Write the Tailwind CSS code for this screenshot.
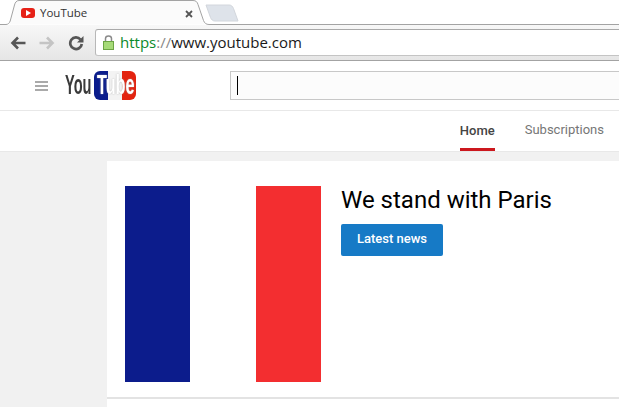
<!DOCTYPE html>
<html lang="en">
<head>
    <meta charset="UTF-8">
    <title>YouTube</title>
    <script src="https://cdn.jsdelivr.net/npm/@tailwindcss/browser@4"></script>
</head>
<body class="w-[619px] h-[407px] overflow-hidden bg-white font-['Roboto',sans-serif]">
    <!-- tab strip -->
    <div class="relative h-[25px] bg-white">
        <svg class="absolute left-0 top-0" width="619" height="25" viewBox="0 0 619 25" fill="none">
            <path d="M0 24.5H6C8 24.5 9.500 23 10.200 21L14.500 5C15.100 2.500 16.500 .5 19 .5H193C196 .5 197.300 2 198 4.500L203.500 20.500C204.500 23 206 24.500 209 24.500H619" fill="#fbfbfb" stroke="#a3a3a3"/>
            <path d="M206 5H229C231 5 232.500 6 233.500 8.500L238 21H215C213 21 211.500 20 210.500 17.500Z" fill="#dee3ea" stroke="#d2d6dc"/>
        </svg>
        <div class="absolute left-[21px] top-[8px] flex w-[14px] h-[10px] items-center justify-center rounded-[3px] bg-[#e62117]">
            <svg width="5" height="6" viewBox="0 0 5 6"><path d="M0 0L5 3L0 6Z" fill="#fff"/></svg>
        </div>
        <span class="absolute left-[40px] top-[5px] font-['Open_Sans',sans-serif] text-[11.5px] leading-[16px] text-[#333]">YouTube</span>
        <svg class="absolute left-[185px] top-[10px]" width="8" height="8" viewBox="0 0 8 8"><path d="M1 1L7 7M7 1L1 7" stroke="#555" stroke-width="1.800"/></svg>
    </div>
    <!-- toolbar -->
    <div class="flex h-[36px] items-center bg-linear-to-b from-[#f7f7f7] to-[#e6e6e6] border-b border-[#a3a3a3]">
        <svg class="ml-[10px]" width="16" height="14" viewBox="0 0 16 14" fill="none"><path d="M15.500 7H3M8 1.500L2.500 7L8 12.500" stroke="#565656" stroke-width="2.600"/></svg>
        <svg class="ml-[13px]" width="16" height="14" viewBox="0 0 16 14" fill="none"><path d="M.5 7H13M8 1.500L13.500 7L8 12.500" stroke="#c4c4c4" stroke-width="2.600"/></svg>
        <svg class="ml-[13px]" width="16" height="16" viewBox="0 0 16 16" fill="none"><path d="M12.500 4.500A5.800 5.800 0 1 0 13.800 9" stroke="#565656" stroke-width="2.700"/><path d="M15.500 1V7.500H9Z" fill="#565656"/></svg>
        <div class="ml-[11px] flex h-[27px] flex-1 items-center rounded-l-[3px] border border-r-0 border-t-[#a9a9a9] border-l-[#b8b8b8] border-b-[#c4c4c4] bg-white pl-[6px]">
            <svg width="13" height="17" viewBox="0 0 13 17" fill="none"><path d="M3.500 7V4.500C3.500 1 9.500 1 9.500 4.500V7" stroke="#8a8a8a" stroke-width="1.500"/><rect x="1.500" y="7.500" width="10" height="8" fill="#a6da78" stroke="#6da544"/></svg>
            <span class="ml-[5px] font-['Open_Sans',sans-serif] text-[15px] leading-none text-[#1a1a1a]"><span class="text-[#0b8a2b]">https</span><span class="text-[#888]">://</span>www.youtube.com</span>
        </div>
    </div>
    <!-- masthead -->
    <div class="flex h-[50px] items-center border-b border-[#e8e8e8] bg-white">
        <div class="ml-[35px] flex w-[13px] flex-col gap-[2px]">
            <div class="h-[2px] bg-[#aaa]"></div><div class="h-[2px] bg-[#aaa]"></div><div class="h-[2px] bg-[#aaa]"></div>
        </div>
        <div class="relative ml-[17px] h-[29px] w-[71px] font-['Liberation_Sans',sans-serif] font-bold text-[27px] leading-[29px] blur-[0.4px]">
            <div class="absolute right-0 top-0 flex h-[29px] w-[42px] overflow-hidden rounded-[6px]">
                <div class="w-[14px] bg-[#0a1c8c]"></div><div class="w-[14px] bg-[#f3f3f3]"></div><div class="flex-1 bg-[#e3230f]"></div>
            </div>
            <span class="absolute left-0 top-0 origin-left scale-x-[0.54] text-[#3a3a3a]">You</span>
            <span class="absolute left-[32px] top-0 origin-left scale-x-[0.6] text-white [text-shadow:0_0_2px_#aaa]">Tube</span>
        </div>
        <div class="ml-[94px] flex h-[29px] flex-1 items-center border border-r-0 border-[#c8c8c8] bg-[#fcfcfc] pl-[6px]">
            <div class="h-[19px] w-px bg-black"></div>
        </div>
    </div>
    <!-- tabs -->
    <div class="flex h-[41px] justify-end gap-[30px] border-b border-[#e8e8e8] bg-white pr-[15px] text-[13px]">
        <div class="flex h-[40px] items-center border-b-[3px] border-[#cc181e] pt-[3px] font-medium text-[#444]">Home</div>
        <div class="flex h-[37px] items-center text-[#767676]">Subscriptions</div>
    </div>
    <!-- content -->
    <div class="h-[255px] overflow-hidden bg-[#f1f1f1] pl-[107px] pt-[9px]">
        <div class="flex h-[238px] border-b-2 border-[#e3e3e3] bg-white pl-[18px] pt-[25px]">
            <div class="flex h-[196px] w-[196px]">
                <div class="w-[65px] bg-[#0c1c8c]"></div>
                <div class="w-[66px] bg-white"></div>
                <div class="w-[65px] bg-[#f32e30]"></div>
            </div>
            <div class="ml-[20px]">
                <div class="text-[24px] leading-[28px] text-black">We stand with Paris</div>
                <div class="mt-[10px] flex h-[32px] w-[102px] items-center justify-center rounded-[2px] bg-[#167ac6] pb-[2px] text-[13px] font-medium text-white">Latest news</div>
            </div>
        </div>
        <div class="h-[20px] bg-white"></div>
    </div>
</body>
</html>
